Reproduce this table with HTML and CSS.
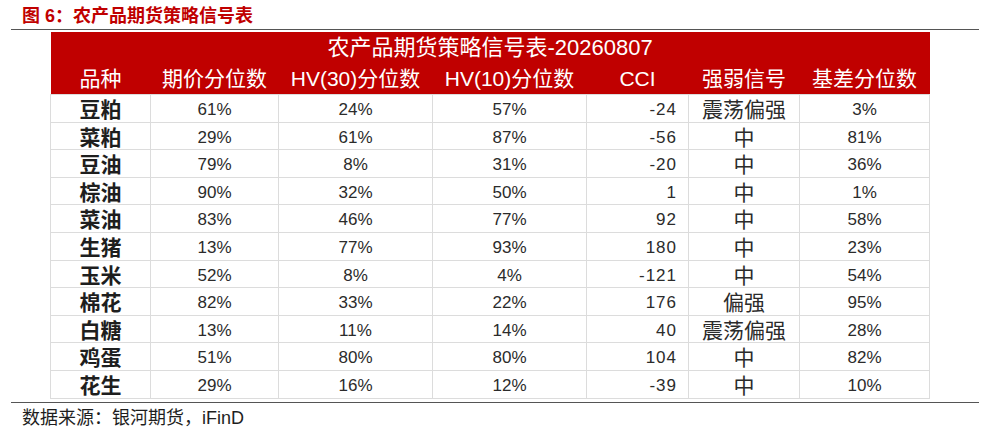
FILE: index.html
```html
<!DOCTYPE html>
<html lang="zh-CN">
<head>
<meta charset="utf-8">
<title>农产品期货策略信号表</title>
<link rel="stylesheet" href="styles.css">
</head>
<body>
<div class="figure">
  <h1 class="fig-title">图 6：农产品期货策略信号表</h1>
  <div class="frame">
    <table class="signal">
      <colgroup>
        <col class="c1"><col class="c2"><col class="c3"><col class="c4"><col class="c5"><col class="c6"><col class="c7">
      </colgroup>
      <thead>
        <tr class="caption-row"><th colspan="7">农产品期货策略信号表-20260807</th></tr>
        <tr class="head-row">
          <th>品种</th><th>期价分位数</th><th>HV(30)分位数</th><th>HV(10)分位数</th><th class="cci-h">CCI</th><th>强弱信号</th><th>基差分位数</th>
        </tr>
      </thead>
      <tbody>
        <tr><td class="name">豆粕</td><td>61%</td><td>24%</td><td>57%</td><td class="cci">-24</td><td class="sig">震荡偏强</td><td>3%</td></tr>
        <tr><td class="name">菜粕</td><td>29%</td><td>61%</td><td>87%</td><td class="cci">-56</td><td class="sig">中</td><td>81%</td></tr>
        <tr><td class="name">豆油</td><td>79%</td><td>8%</td><td>31%</td><td class="cci">-20</td><td class="sig">中</td><td>36%</td></tr>
        <tr><td class="name">棕油</td><td>90%</td><td>32%</td><td>50%</td><td class="cci">1</td><td class="sig">中</td><td>1%</td></tr>
        <tr><td class="name">菜油</td><td>83%</td><td>46%</td><td>77%</td><td class="cci">92</td><td class="sig">中</td><td>58%</td></tr>
        <tr><td class="name">生猪</td><td>13%</td><td>77%</td><td>93%</td><td class="cci">180</td><td class="sig">中</td><td>23%</td></tr>
        <tr><td class="name">玉米</td><td>52%</td><td>8%</td><td>4%</td><td class="cci">-121</td><td class="sig">中</td><td>54%</td></tr>
        <tr><td class="name">棉花</td><td>82%</td><td>33%</td><td>22%</td><td class="cci">176</td><td class="sig">偏强</td><td>95%</td></tr>
        <tr><td class="name">白糖</td><td>13%</td><td>11%</td><td>14%</td><td class="cci">40</td><td class="sig">震荡偏强</td><td>28%</td></tr>
        <tr><td class="name">鸡蛋</td><td>51%</td><td>80%</td><td>80%</td><td class="cci">104</td><td class="sig">中</td><td>82%</td></tr>
        <tr><td class="name">花生</td><td>29%</td><td>16%</td><td>12%</td><td class="cci">-39</td><td class="sig">中</td><td>10%</td></tr>
      </tbody>
    </table>
  </div>
  <p class="source">数据来源：银河期货，iFinD</p>
</div>
</body>
</html>
```

FILE: styles.css
```css
html, body {
  margin: 0;
  padding: 0;
  background: #ffffff;
}

body {
  width: 998px;
  height: 442px;
  overflow: hidden;
  font-family: "Liberation Sans", "Noto Sans CJK SC", sans-serif;
  color: #2b2b2b;
}

.fig-title {
  margin: 0;
  padding: 5px 0 2px 22px;
  font-size: 18px;
  line-height: 22px;
  font-weight: bold;
  color: #c00000;
  font-family: "Liberation Sans", "Noto Sans CJK SC", sans-serif;
}

.frame {
  margin: 0 19px 0 11px;
  border-top: 1.5px solid #555555;
  border-bottom: 1.5px solid #555555;
  padding: 2px 0 3px 39px;
}

.signal {
  border-collapse: collapse;
  table-layout: fixed;
  width: 879px;
}

.c1 { width: 100px; }
.c2 { width: 128px; }
.c3 { width: 154px; }
.c4 { width: 154px; }
.c5 { width: 102px; }
.c6 { width: 111px; }
.c7 { width: 130px; }

.signal thead th {
  background: #c00000;
  color: #ffffff;
  font-weight: normal;
  padding: 0;
  white-space: nowrap;
}

.caption-row th {
  height: 31px;
  font-size: 22px;
  line-height: 31px;
  padding-top: 1px;
}

.head-row th {
  height: 31px;
  font-size: 21px;
  line-height: 31px;
  padding-bottom: 3px;
}

.signal tbody td {
  height: 23.6px;
  padding: 3px 0 0;
  border: 1px solid #dcdcdc;
  text-align: center;
  font-size: 17px;
  line-height: 23.6px;
  color: #2b2b2b;
  white-space: nowrap;
  vertical-align: middle;
}

.signal tbody td.name {
  font-size: 21px;
  font-weight: bold;
  color: #1e1e1e;
}

.signal tbody td.sig {
  font-size: 21px;
}

.signal tbody td.cci {
  text-align: right;
  padding-right: 11px;
  letter-spacing: 1px;
}

.source {
  margin: 4px 0 0 22px;
  font-size: 18px;
  line-height: 22px;
  color: #1e1e1e;
}
```
